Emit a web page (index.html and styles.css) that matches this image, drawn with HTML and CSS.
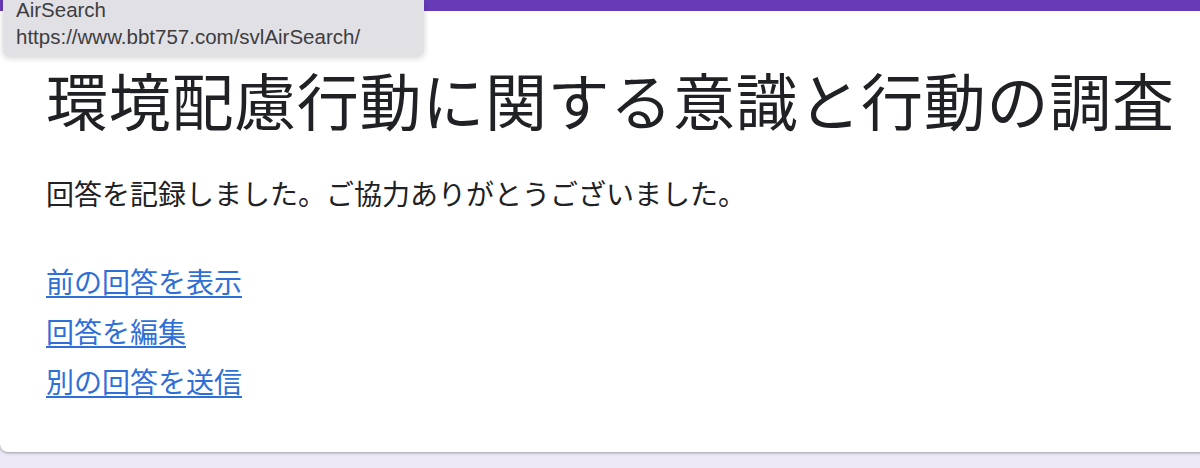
FILE: index.html
```html
<!DOCTYPE html>
<html lang="ja">
<head>
<meta charset="utf-8">
<title>環境配慮行動に関する意識と行動の調査</title>
<link rel="stylesheet" href="styles.css">
</head>
<body>
<div class="page">
  <div class="card">
    <h1 class="title">環境配慮行動に関する意識と行動の調査</h1>
    <p class="message">回答を記録しました。ご協力ありがとうございました。</p>
    <div class="links">
      <a class="link" href="#">前の回答を表示</a>
      <a class="link" href="#">回答を編集</a>
      <a class="link" href="#">別の回答を送信</a>
    </div>
  </div>
  <div class="tooltip">
    <div class="tip-title">AirSearch</div>
    <div class="tip-url">https://www.bbt757.com/svlAirSearch/</div>
  </div>
</div>
</body>
</html>
```

FILE: styles.css
```css
html, body {
  margin: 0;
  padding: 0;
}
body {
  background: #ede9f6;
  font-family: "Noto Sans CJK JP", "Noto Sans", sans-serif;
  overflow: hidden;
}
.page {
  position: relative;
  width: 1200px;
  height: 468px;
  overflow: hidden;
}
.card {
  width: 1230px;
  box-sizing: border-box;
  background: #fff;
  border-top: 11px solid #673ab7;
  border-radius: 0 0 8px 8px;
  box-shadow: 0 1px 2px rgba(60, 64, 67, 0.3), 0 1px 3px 1px rgba(60, 64, 67, 0.12);
  padding: 51px 0 46px 46px;
}
.title {
  margin: 0;
  font-weight: 400;
  font-size: 62px;
  line-height: 74px;
  color: #202124;
  letter-spacing: 0.7px;
  white-space: nowrap;
}
.message {
  margin: 39px 0 0;
  font-size: 28px;
  line-height: 36px;
  color: #202124;
  white-space: nowrap;
}
.links {
  display: flex;
  flex-direction: column;
  align-items: flex-start;
  margin-top: 45px;
}
.link {
  font-size: 28px;
  line-height: 50px;
  color: #2f6fd8;
  text-decoration: underline;
  text-underline-offset: 3px;
  text-decoration-thickness: 2px;
}
.tooltip {
  position: absolute;
  top: 0;
  left: 3px;
  width: 421px;
  height: 56px;
  box-sizing: border-box;
  padding-left: 13px;
  background: #e1e0e4;
  border-radius: 0 0 6px 6px;
  box-shadow: 0 2px 6px rgba(0, 0, 0, 0.18);
  font-family: "Liberation Sans", Arial, sans-serif;
  font-size: 20.5px;
  color: #3d3d3f;
}
.tip-title {
  line-height: 20px;
  white-space: nowrap;
}
.tip-url {
  margin-top: 3px;
  line-height: 28px;
  white-space: nowrap;
}
```
